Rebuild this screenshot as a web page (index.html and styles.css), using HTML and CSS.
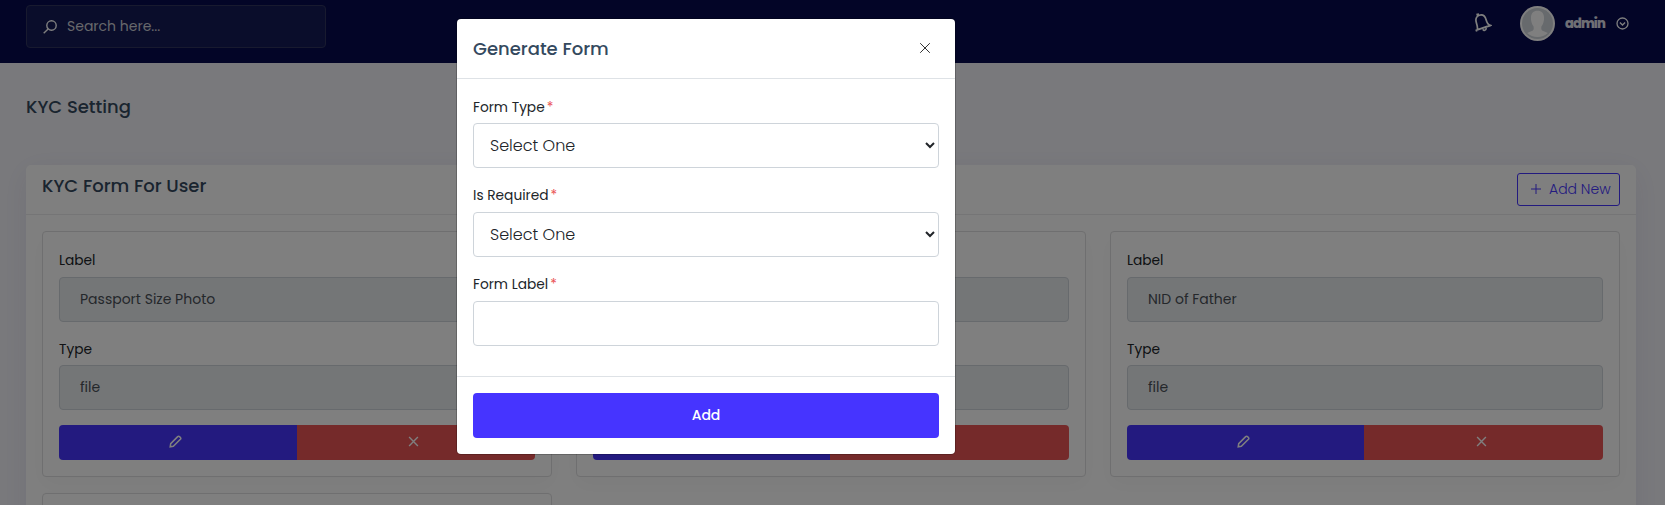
FILE: index.html
```html
<!DOCTYPE html>
<html lang="en">
<head>
<meta charset="utf-8">
<title>KYC Setting</title>
<link rel="stylesheet" href="styles.css">
</head>
<body>
<svg class="defs" aria-hidden="true">
  <symbol id="pen" viewBox="0 0 13 13"><path d="M1.200 11.800 1.700 8.700 8.700 1.600a1.300 1.300 0 0 1 1.800 0l.9.9a1.300 1.300 0 0 1 0 1.800L4.300 11.300Z"/></symbol>
  <symbol id="cross" viewBox="0 0 12 12"><path d="m1.2 1.2 9.6 9.6m0-9.6-9.6 9.6"/></symbol>
</svg>
<div class="page">
  <header class="topbar">
    <label class="search">
      <svg class="search-icon" viewBox="0 0 14 14"><circle cx="8.5" cy="5.5" r="4.7"/><path d="M5.1 8.9.7 13.3"/></svg>
      <span class="search-text">Search here...</span>
    </label>
    <div class="account">
      <svg class="bell" viewBox="0 0 18 20"><path d="M3.2 16.8C4 15 3.3 12.700 2.3 9.500 1.200 5.700 2.600 3 5.400 2.200c3-.8 5.600.7 6.700 4.500.9 3.200 2 5 4.100 5.700ZM3.500 2.600l-.3-1.100 1.800-.4M2.800 17l-.5 1.600M9 16.200c.5 1.900 3.400 1.300 3.100-1.100M1.500 17.500l15.500-5"/></svg>
      <svg class="avatar" viewBox="0 0 35 35"><circle cx="17.500" cy="17.500" r="17.500" fill="#fff"/><circle cx="17.500" cy="17.500" r="15.500" fill="#ced4da"/><path fill="#fff" d="M17.500 4.800c4 0 6.500 2.700 6.500 6.500 0 1.500.1 2.200-.2 3.500-.4 2.700-1.300 4.200-2.200 5.300-.7 2.500-.2 4 1 4.600l5.300 2.400a15.500 15.500 0 0 1-20.800 0l5.300-2.400c1.200-.6 1.700-2.100 1-4.600-.9-1.100-1.800-2.600-2.200-5.300-.3-1.300-.2-2-.2-3.500 0-3.800 2.500-6.500 6.500-6.500Z"/></svg>
      <span class="name">admin</span>
      <svg class="chev" viewBox="0 0 13 13"><circle cx="6.500" cy="6.500" r="5.500"/><path d="M3.900 5.500 6.500 8l2.600-2.500"/></svg>
    </div>
  </header>
  <main class="content">
    <h1 class="page-title">KYC Setting</h1>
    <section class="panel">
      <div class="panel-head">
        <h2 class="panel-title">KYC Form For User</h2>
        <button class="add-new"><svg class="plus" viewBox="0 0 10 10"><path d="M5 0v10M0 5h10"/></svg><span>Add New</span></button>
      </div>
      <div class="cards">
        <article class="card">
          <div class="label">Label</div><div class="field">Passport Size Photo</div>
          <div class="label">Type</div><div class="field">file</div>
          <div class="actions"><span class="edit"><svg><use href="#pen"/></svg></span><span class="remove"><svg><use href="#cross"/></svg></span></div>
        </article>
        <article class="card">
          <div class="label"></div><div class="field"></div>
          <div class="label"></div><div class="field"></div>
          <div class="actions"><span class="edit"></span><span class="remove"></span></div>
        </article>
        <article class="card">
          <div class="label">Label</div><div class="field">NID of Father</div>
          <div class="label">Type</div><div class="field">file</div>
          <div class="actions"><span class="edit"><svg><use href="#pen"/></svg></span><span class="remove"><svg><use href="#cross"/></svg></span></div>
        </article>
        <article class="card"></article>
      </div>
    </section>
  </main>
</div>
<div class="backdrop">
  <div class="modal">
    <div class="modal-head"><h5 class="modal-title">Generate Form</h5><svg class="close"><use href="#cross"/></svg></div>
    <div class="modal-body">
      <div class="form-label">Form Type<b>*</b></div>
      <select class="control"><option>Select One</option></select>
      <div class="form-label">Is Required<b>*</b></div>
      <select class="control"><option>Select One</option></select>
      <div class="form-label">Form Label<b>*</b></div>
      <input class="control">
    </div>
    <div class="modal-foot"><button class="submit">Add</button></div>
  </div>
</div>
</body>
</html>
```
FILE: styles.css
```css
* { box-sizing: border-box; }
body { margin: 0; height: 505px; overflow: hidden; font-family: Poppins, Inter, "Open Sans", sans-serif; font-size: 14px; color: #212529; }
h1, h2, h5 { margin: 0; font-weight: 500; font-size: 18px; color: #34495e; }
svg { fill: none; stroke: currentColor; flex: none; }
.defs { display: none; }
.page { height: 505px; overflow: hidden; background: #f3f3f9; }
.topbar { height: 63px; padding: 5px 35px 0 26px; background: #060b4e; display: flex; justify-content: space-between; align-items: flex-start; color: #fff; }
.search { width: 300px; height: 43px; padding: 0 16px; border: 1px solid #30355f; border-radius: 4px; background: #141a56; display: flex; align-items: center; gap: 10px; }
.search-icon { width: 14px; height: 14px; stroke-width: 1.4; }
.search-text { font-size: 14px; color: #cfd0d8; }
.account { height: 35px; margin-top: 1px; display: flex; align-items: center; }
.bell { width: 18px; height: 20px; stroke-width: 1.7; margin-right: 28px; margin-top: -2px; }
.avatar { width: 35px; height: 35px; stroke: none; margin-right: 10px; }
.name { width: 41px; font-weight: 800; font-size: 13px; color: #dedee8; letter-spacing: -.9px; margin-right: 10px; white-space: nowrap; }
.chev { width: 13px; height: 13px; stroke-width: 1.3; margin-top: -1px; margin-right: 1px; }
.content { padding: 0 29px 0 26px; }
.page-title { height: 102px; padding-top: 30px; line-height: 28px; }
.panel { height: 420px; background: #fff; border-radius: 5px; box-shadow: 0 6px 30px rgba(50, 35, 120, .08); }
.panel-head { height: 50px; padding: 8px 16px 0; border-bottom: 1px solid #eaeaec; display: flex; justify-content: space-between; align-items: flex-start; }
.panel-title { line-height: 26px; }
.add-new { width: 103px; height: 33px; padding: 0 0 0 13px; border: 1px solid #4634ff; border-radius: 3px; background: none; color: #4634ff; font: 300 14px Poppins, Inter, sans-serif; display: flex; align-items: center; gap: 8px; }
.plus { width: 10px; height: 10px; margin-top: -2px; }
.cards { padding: 16px; display: grid; grid-template-columns: repeat(3, 510px); column-gap: 24px; row-gap: 16px; }
.card { height: 246px; padding: 16px; border: 1px solid #dedee0; border-radius: 4px; background: #fff; box-shadow: 0 8px 20px rgba(0, 0, 0, .03); }
.label { height: 29px; line-height: 26px; font-size: 13.75px; }
.field { height: 45px; padding-left: 20px; border: 1px solid #ced4da; border-radius: 4px; background: #e9ecef; color: #495057; line-height: 43px; font-size: 14px; }
.field + .label { height: 43px; padding-top: 15px; }
.actions { height: 35px; margin-top: 15px; border-radius: 4px; overflow: hidden; display: grid; grid-template-columns: 237.4px 1fr; color: #fff; }
.card:first-child .actions { grid-template-columns: 238px 1fr; }
.actions span { display: grid; place-items: center; padding-bottom: 2px; padding-right: 5px; }
.edit { background: #4634ff; }
.remove { background: #ea5455; }
.edit svg { width: 13px; height: 13px; stroke-width: 1.5; }
.remove svg { width: 11px; height: 11px; stroke-width: 1.5; }
.backdrop { position: absolute; inset: 0; padding-top: 19px; padding-left: 457px; background: rgba(0, 0, 0, .5); }
.modal { width: 498px; height: 435px; border-radius: 4px; background: #fff; box-shadow: 0 0 0 1px rgba(0, 0, 0, .2); display: flex; flex-direction: column; }
.modal-head { height: 60px; padding: 0 24px 0 16px; border-bottom: 1px solid #dee2e6; display: flex; justify-content: space-between; align-items: center; }
.close { width: 12px; height: 12px; stroke-width: 1; margin-top: -2px; color: #333; }
.modal-body { height: 297px; padding: 16px 16px 0; }
.form-label { height: 28px; line-height: 26px; font-size: 13.75px; }
.form-label b { color: #ea5455; font-weight: 400; margin-left: 2px; }
.control { display: block; width: 466px; height: 45px; margin: 0; padding: 6px 12px; border: 1px solid #ced4da; border-radius: 4px; background: #fff; color: #212529; font: 300 16px Poppins, Inter, sans-serif; }
.control + .form-label { height: 44px; padding-top: 15px; }
.modal-foot { height: 78px; padding: 16px; border-top: 1px solid #dee2e6; }
.submit { width: 466px; height: 45px; border: 0; border-radius: 4px; background: #4634ff; color: #fff; font: 500 14px Poppins, Inter, sans-serif; }
```
